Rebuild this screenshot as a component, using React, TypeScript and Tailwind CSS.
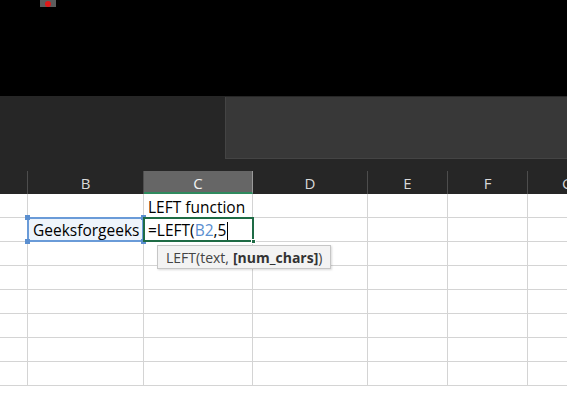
const cols = [
  { key: "A", w: "w-[28px]" },
  { key: "B", w: "w-[116px]" },
  { key: "C", w: "w-[109px]" },
  { key: "D", w: "w-[115px]" },
  { key: "E", w: "w-[80px]" },
  { key: "F", w: "w-[80px]" },
  { key: "G", w: "w-[80px]" },
];

const font = "font-['Open_Sans','Noto_Sans',sans-serif]";

const HeaderRow = () => (
  <div className="flex h-[23px] bg-[#262626]">
    {cols.map((c) => (
      <div
        key={c.key}
        className={`${c.w} shrink-0 flex items-end justify-center text-[15px] leading-none ${
          c.key === "C"
            ? "bg-[#666666] text-[#f2f2f2] border-b-2 border-[#2f8a5e] border-r border-r-[#9a9a9a] pb-[1px]"
            : "text-[#d9d9d9] border-r border-[#4d4d4d] pb-[3px]"
        }`}
      >
        {c.key === "A" ? "" : c.key}
      </div>
    ))}
  </div>
);

const Row = () => (
  <div className="flex h-[24px] border-b border-[#d4d4d4] bg-white">
    {cols.map((c) => (
      <div key={c.key} className={`${c.w} shrink-0 border-r border-[#d4d4d4]`} />
    ))}
  </div>
);

const Handle = ({ pos }: { pos: string }) => (
  <span className={`absolute w-[5px] h-[5px] bg-[#5b8fd0] ${pos}`} />
);

export default function App() {
  return (
    <div className={`w-[567px] h-[393px] overflow-hidden bg-white flex flex-col ${font}`}>
      {/* window title area */}
      <div className="h-[96px] shrink-0 bg-black relative">
        <div className="absolute left-[40px] top-0 w-[16px] h-[7px] bg-[#5c5c5c] flex items-center justify-center">
          <span className="w-[6px] h-[6px] rounded-full bg-[#e01818]" />
        </div>
      </div>

      {/* ribbon band */}
      <div className="h-[75px] shrink-0 bg-[#262626] flex pt-[1px]">
        <div className="w-[225px]" />
        <div className="flex-1 h-[62px] bg-[#383838] border-l border-b border-[#444444]" />
      </div>

      <HeaderRow />

      <div className="relative flex-1">
        {Array.from({ length: 8 }).map((_, i) => (
          <Row key={i} />
        ))}

        {/* C1 */}
        <div className="absolute left-[148px] top-[3px] h-[22px] flex items-center text-[15.5px] text-black">
          LEFT function
        </div>

        {/* B2 reference highlight */}
        <div className="absolute left-[27px] top-[23px] w-[117px] h-[25px] border-2 border-[#6a9bd8] bg-[#eef4fb] flex items-center pl-[4px] pt-[2px] text-[15.5px] text-black">
          Geeksforgeeks
          <Handle pos="-left-[4px] -top-[4px]" />
          <Handle pos="-right-[4px] -top-[4px]" />
          <Handle pos="-left-[4px] -bottom-[4px]" />
          <Handle pos="-right-[4px] -bottom-[4px]" />
        </div>

        {/* C2 active cell */}
        <div className="absolute left-[143px] top-[23px] w-[111px] h-[25px] border-2 border-[#1e6b45] bg-white flex items-center pl-[3px] pt-[2px] text-[15.5px] text-black">
          =LEFT(<span className="text-[#5b8fd0]">B2</span>,5
          <span className="ml-[1px] w-[1px] h-[18px] bg-black" />
          <span className="absolute -right-[4px] -bottom-[4px] w-[5px] h-[5px] bg-[#1e6b45] border border-white" />
        </div>

        {/* function tooltip */}
        <div className="absolute left-[157px] top-[51px] h-[24px] px-[8px] flex items-center bg-[#f3f3f3] border border-[#c6c6c6] shadow-[1px_1px_2px_rgba(0,0,0,0.15)] text-[14px] text-[#444444]">
          LEFT(text, <span className="ml-[4px] font-bold text-[#333333]">[num_chars]</span>)
        </div>
      </div>
    </div>
  );
}
